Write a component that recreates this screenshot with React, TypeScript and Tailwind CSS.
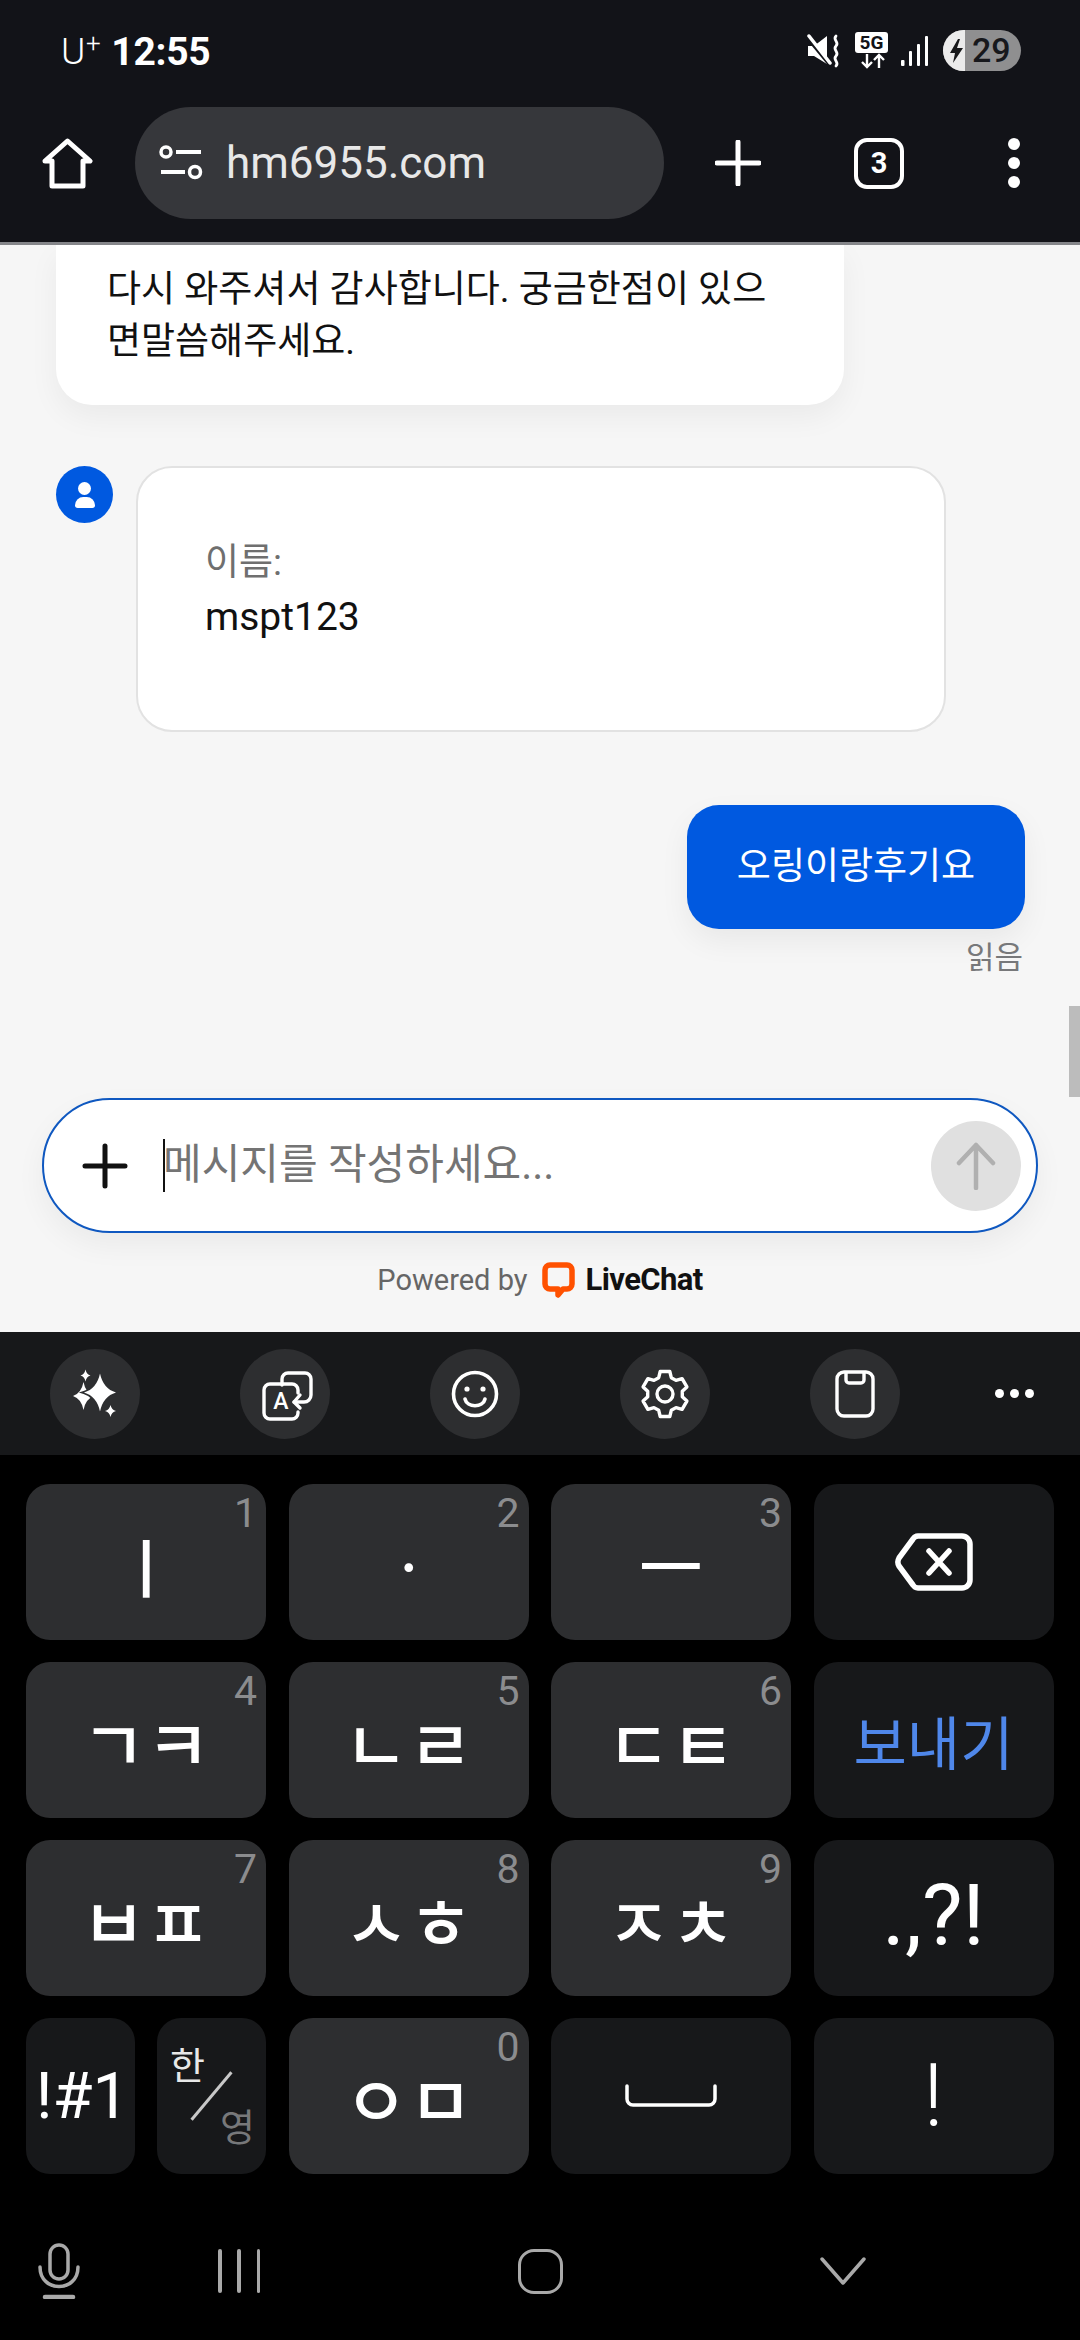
const sans = "font-['Roboto','Noto_Sans_CJK_KR',sans-serif]";
const kr = "font-['Noto_Sans_CJK_KR','Roboto',sans-serif]";

const star = (cx: number, cy: number, w: number, h: number) =>
  `M${cx} ${cy - h}Q${cx + w * 0.2} ${cy - h * 0.2} ${cx + w} ${cy}Q${cx + w * 0.2} ${cy + h * 0.2} ${cx} ${cy + h}Q${cx - w * 0.2} ${cy + h * 0.2} ${cx - w} ${cy}Q${cx - w * 0.2} ${cy - h * 0.2} ${cx} ${cy - h}Z`;

// six teeth, pointy side up
const gearPath = () => {
  const pts: string[] = [];
  for (let k = 0; k < 6; k++) {
    const a = -90 + 60 * k;
    [[-21, 17.5], [-12, 23], [12, 23], [21, 17.5]].forEach(([d, r]) => {
      const t = ((a + d) * Math.PI) / 180;
      pts.push(`${(25 + r * Math.cos(t)).toFixed(1)} ${(25 + r * Math.sin(t)).toFixed(1)}`);
    });
  }
  return `M${pts.join("L")}Z`;
};

const Hint = ({ n }: { n: string }) => (
  <span className="absolute right-[9px] top-[5px] font-['Roboto'] text-[41px] leading-[48px] text-[#8b8c8e]">{n}</span>
);

const JamoKey = ({ label, hint, size = "text-[70px]" }: { label: string; hint: string; size?: string }) => (
  <div className={`relative flex h-[156px] items-center justify-center rounded-[24px] bg-[#2d2e30] text-white ${kr}`}>
    <Hint n={hint} />
    <span className={`pt-[3px] font-medium leading-none ${size}`}>{label}</span>
  </div>
);

const FnKey = ({ children, className = "" }: { children: React.ReactNode; className?: string }) => (
  <div className={`relative flex h-[156px] items-center justify-center rounded-[24px] bg-[#17181a] text-white ${className}`}>
    {children}
  </div>
);

const ToolCircle = ({ children }: { children: React.ReactNode }) => (
  <div className="flex h-[90px] w-[90px] items-center justify-center rounded-full bg-[#2d2e30] text-white">{children}</div>
);

const StatusIcons = () => (
  <div className="flex items-center">
    {/* mute + vibrate */}
    <svg width="34" height="36" viewBox="0 0 34 36" fill="none">
      <path d="M1 13h6L20 3v28L7 23H1z" fill="white" />
      <path d="M1 5l23 28" stroke="#121318" strokeWidth="4" />
      <path d="M2 3l21 27" stroke="white" strokeWidth="3.500" strokeLinecap="round" />
      <path d="M29 3c-4 4 4 6 0 10s4 6 0 10 4 6 0 10" stroke="white" strokeWidth="2.800" strokeLinecap="round" />
    </svg>
    {/* 5G */}
    <div className="ml-[14px] flex w-[33px] flex-col items-center">
      <div className="flex h-[21px] w-[33px] items-center justify-center rounded-[3px] bg-white font-['Roboto'] text-[19px] font-bold leading-none text-[#121318]">5G</div>
      <svg width="28" height="16" viewBox="0 0 28 16" fill="none" stroke="white" strokeWidth="2.400">
        <path d="M9 1v13M4 9l5 5 5-5" />
        <path d="M21 15V2M16 7l5-5 5 5" />
      </svg>
    </div>
    {/* signal */}
    <svg className="ml-[13px]" width="28" height="30" viewBox="0 0 28 30" fill="white">
      <rect x="0" y="24" width="3.500" height="6" rx="1" />
      <rect x="8" y="15" width="3" height="15" rx="1" />
      <rect x="16" y="8" width="3" height="22" rx="1" />
      <rect x="24" y="0" width="3" height="30" rx="1" />
    </svg>
    {/* battery */}
    <div className="relative ml-[14px] flex h-[41px] w-[78px] overflow-hidden rounded-full bg-[#8f8f90]">
      <div className="flex h-full w-[22px] items-center justify-end bg-[#ebebeb] pr-[1px]">
        <svg width="15" height="24" viewBox="0 0 15 24" fill="#17181a">
          <path d="M9 0L1 14h5l-2 10 10-15H8l3-9z" />
        </svg>
      </div>
      <span className="pl-[7px] font-['Roboto'] text-[34px] font-medium leading-[41px] text-[#17181c]">29</span>
    </div>
  </div>
);

const Header = () => (
  <header className="h-[245px] shrink-0 border-b-[3px] border-[#85868a] bg-[#121318] text-white">
    <div className="flex h-[107px] items-start justify-between pl-[61px] pr-[59px] pt-[30px]">
      <div className="flex items-center font-['Roboto'] leading-[44px]">
        <span className="relative mr-[26px] text-[37px] font-light">
          U<span className="absolute left-[25px] top-[-9px] text-[26px]">+</span>
        </span>
        <span className="text-[39px] font-bold tracking-[-0.3px]">12:55</span>
      </div>
      <StatusIcons />
    </div>
    <div className="flex h-[112px] items-center pl-[42px]">
      <svg width="51" height="51" viewBox="0 0 51 51" fill="none" stroke="white" strokeWidth="5" strokeLinejoin="round">
        <path d="M3 23L25.500 3 48 23H41V48H10V23z" />
      </svg>
      <div className="ml-[42px] flex h-[112px] w-[529px] items-center rounded-full bg-[#36373b] pl-[24px]">
        <svg width="44" height="38" viewBox="0 0 44 38" fill="none" stroke="white" strokeWidth="3.500">
          <circle cx="7" cy="8" r="5" />
          <path d="M17 8h25M2 28h24" strokeWidth="4" />
          <circle cx="36" cy="28" r="5.500" />
        </svg>
        <span className="ml-[23px] font-['Roboto'] text-[44px] leading-none text-[#e8e8e8]">hm6955.com</span>
      </div>
      <svg className="ml-[51px]" width="46" height="46" viewBox="0 0 46 46" stroke="white" strokeWidth="5" strokeLinecap="round">
        <path d="M23 2v42M2 23h42" />
      </svg>
      <div className="ml-[93px] flex h-[51px] w-[50px] items-center justify-center rounded-[13px] border-[4.500px] border-white font-['Roboto'] text-[29px] font-bold leading-none">3</div>
      <div className="ml-[104px] flex flex-col gap-[7px]">
        <div className="h-[12px] w-[12px] rounded-full bg-white" />
        <div className="h-[12px] w-[12px] rounded-full bg-white" />
        <div className="h-[12px] w-[12px] rounded-full bg-white" />
      </div>
    </div>
  </header>
);

const Chat = () => (
  <main className={`relative flex h-[1087px] shrink-0 flex-col overflow-hidden bg-[#f6f6f6] ${sans}`}>
    <div className="ml-[56px] h-[160px] w-[788px] shrink-0 rounded-b-[36px] bg-white pl-[51px] pt-[19px] text-[37px] leading-[52px] text-[#111] shadow-[0_12px_30px_rgba(0,0,0,0.05)]">
      다시 와주셔서 감사합니다. 궁금한점이 있으
      <br />
      면말씀해주세요.
    </div>
    <div className="ml-[56px] mt-[61px] flex gap-[23px]">
      <div className="flex h-[57px] w-[57px] flex-col items-center justify-center rounded-full bg-[#0059e0]">
        <div className="h-[13px] w-[13px] rounded-full bg-white" />
        <div className="mt-[2px] h-[11px] w-[20px] rounded-t-[9px] rounded-b-[3px] bg-white" />
      </div>
      <div className="h-[266px] w-[810px] rounded-[36px] border-2 border-[#e2e2e2] bg-white pl-[67px] pt-[68px] text-[37px] leading-[54px]">
        <div className="text-[#6f6f6f]">이름:</div>
        <div className="text-[39px] text-[#111]">mspt123</div>
      </div>
    </div>
    <div className="mr-[55px] mt-[73px] flex h-[124px] w-[338px] items-center justify-center self-end rounded-[32px] bg-[#0059e0] text-[37px] text-white shadow-[0_12px_30px_rgba(0,0,0,0.06)]">
      오링이랑후기요
    </div>
    <div className="mr-[57px] mt-[11px] self-end text-[31px] leading-[36px] text-[#77787a]">읽음</div>

    <div className="mx-[42px] mt-[122px] flex h-[135px] w-[996px] shrink-0 items-center rounded-full border-2 border-[#0f58c0] bg-white pl-[38px] pr-[15px] shadow-[0_12px_30px_rgba(0,0,0,0.05)]">
      <svg width="46" height="46" viewBox="0 0 46 46" stroke="#111" strokeWidth="5" strokeLinecap="round">
        <path d="M23 3v40M3 23h40" />
      </svg>
      <div className="ml-[35px] h-[53px] w-[2px] bg-[#111]" />
      <span className="-ml-[2px] flex-1 pb-[2px] text-[42px] leading-none text-[#747474]">메시지를 작성하세요...</span>
      <div className="flex h-[90px] w-[90px] items-center justify-center rounded-full bg-[#e0e0e0]">
        <svg width="40" height="48" viewBox="0 0 40 48" fill="none" stroke="#b0b0b0" strokeWidth="4.500" strokeLinecap="round" strokeLinejoin="round">
          <path d="M20 46V3M3 21L20 3l17 18" />
        </svg>
      </div>
    </div>

    <div className="mt-[27px] flex items-center justify-center">
      <span className="text-[29px] leading-[40px] text-[#666]">Powered by</span>
      <svg className="ml-[14px]" width="33" height="36" viewBox="0 0 33 36" fill="none">
        <path d="M8 3h17a5 5 0 015 5v14a5 5 0 01-5 5h-4l-5 6v-6H8a5 5 0 01-5-5V8a5 5 0 015-5z" stroke="#ff5100" strokeWidth="5.500" strokeLinejoin="round" />
      </svg>
      <span className="ml-[11px] text-[31px] font-bold leading-[40px] tracking-[-0.6px] text-[#111]">LiveChat</span>
    </div>

    {/* scrollbar thumb */}
    <div className="absolute right-0 top-[761px] h-[91px] w-[11px] bg-[#bcbcbc]" />
  </main>
);

const KeyboardBar = () => (
  <div className="flex h-[123px] shrink-0 items-center bg-[#17181a] pl-[50px]">
    <div className="flex gap-[100px]">
      <ToolCircle>
        <svg width="90" height="90" viewBox="0 0 90 90" fill="white">
          <path d={star(33.500, 47, 10.500, 14)} />
          <path d={star(50, 43.500, 16, 19)} stroke="#2d2e30" strokeWidth="3" paintOrder="stroke" />
          <path d={star(35.500, 26.500, 5, 6)} />
          <path d={star(60.500, 62, 5.500, 6)} />
        </svg>
      </ToolCircle>
      <ToolCircle>
        <svg width="90" height="90" viewBox="0 0 90 90" fill="none" stroke="white" strokeWidth="3.400" strokeLinecap="round" strokeLinejoin="round">
          <path d="M42 36v-6a6 6 0 016-6h17a6 6 0 016 6v16a7 7 0 01-7 7H54" />
          <path d="M60 46l-6 7 6 6" />
          <path d="M58 44v-3a6 6 0 00-6-6H30a6 6 0 00-6 6v23a6 6 0 006 6h22a6 6 0 006-6v-1" />
          <text x="41" y="60" textAnchor="middle" fill="white" stroke="none" fontFamily="Roboto" fontWeight="500" fontSize="23">A</text>
        </svg>
      </ToolCircle>
      <ToolCircle>
        <svg width="48" height="48" viewBox="0 0 48 48" fill="none" stroke="white" strokeWidth="3.600" strokeLinecap="round">
          <circle cx="24" cy="24" r="21.500" />
          <circle cx="16" cy="19" r="2.600" fill="white" stroke="none" />
          <circle cx="32" cy="19" r="2.600" fill="white" stroke="none" />
          <path d="M14 29c2 9 18 9 20 0" />
        </svg>
      </ToolCircle>
      <ToolCircle>
        <svg width="50" height="50" viewBox="0 0 50 50" fill="none" stroke="white" strokeWidth="3.400" strokeLinejoin="round">
          <path d={gearPath()} />
          <circle cx="25" cy="25" r="8" />
        </svg>
      </ToolCircle>
      <ToolCircle>
        <svg width="40" height="48" viewBox="0 0 40 48" fill="none" stroke="white" strokeWidth="3.400">
          <rect x="2" y="2" width="36" height="44" rx="7" />
          <path d="M11 2v8a3 3 0 003 3h12a3 3 0 003-3V2" />
        </svg>
      </ToolCircle>
    </div>
    <div className="ml-[95px] flex gap-[6px]">
      <div className="h-[9px] w-[9px] rounded-full bg-white" />
      <div className="h-[9px] w-[9px] rounded-full bg-white" />
      <div className="h-[9px] w-[9px] rounded-full bg-white" />
    </div>
  </div>
);

const Keyboard = () => (
  <div className="grid grid-cols-[240px_240px_240px_240px] gap-x-[22.500px] gap-y-[22px] px-[26px] pt-[29px]">
    <JamoKey label="ㅣ" hint="1" size="text-[64px]" />
    <JamoKey label="ㆍ" hint="2" size="text-[58px]" />
    <JamoKey label="ㅡ" hint="3" />
    <FnKey>
      <svg width="78" height="58" viewBox="0 0 78 58" fill="none" stroke="white" strokeWidth="5.500" strokeLinejoin="round" strokeLinecap="round">
        <path d="M23 3h44a8 8 0 018 8v36a8 8 0 01-8 8H23a6 6 0 01-5-3L4 33a8 8 0 010-8L18 6a6 6 0 015-3z" />
        <path d="M34 18l20 22M54 18L34 40" />
      </svg>
    </FnKey>

    <JamoKey label="ㄱㅋ" hint="4" />
    <JamoKey label="ㄴㄹ" hint="5" />
    <JamoKey label="ㄷㅌ" hint="6" />
    <FnKey className={`leading-none ${kr}`}>
      <span className="text-[58px] text-[#4f87ea]">보내기</span>
    </FnKey>

    <JamoKey label="ㅂㅍ" hint="7" />
    <JamoKey label="ㅅㅎ" hint="8" />
    <JamoKey label="ㅈㅊ" hint="9" />
    <FnKey className="pb-[5px] font-['Roboto'] text-[86px] leading-none">.,?!</FnKey>

    <div className="grid grid-cols-[109px_109px] gap-x-[22px]">
      <FnKey className="pl-[4px] font-['Roboto'] text-[65px] leading-none">!#1</FnKey>
      <FnKey className={kr}>
        <span className="absolute left-[13px] top-[26px] text-[38px] leading-none text-[#e8e8e8]">한</span>
        <div className="h-[62px] w-[3px] rotate-[40deg] bg-[#c8c8c8]" />
        <span className="absolute bottom-[30px] right-[11px] text-[38px] leading-none text-[#77787a]">영</span>
      </FnKey>
    </div>
    <JamoKey label="ㅇㅁ" hint="0" />
    <FnKey>
      <svg width="92" height="24" viewBox="0 0 92 24" fill="none" stroke="white" strokeWidth="3.500" strokeLinecap="round">
        <path d="M2 2v13a6 6 0 006 6h76a6 6 0 006-6V2" />
      </svg>
    </FnKey>
    <FnKey className="font-['Roboto'] text-[88px] font-light leading-none">!</FnKey>
  </div>
);

const NavBar = () => (
  <div className="flex h-[72px] items-center pl-[38px]">
    <svg width="42" height="56" viewBox="0 0 42 56" fill="none" stroke="#a9a9a9" strokeWidth="3.500" strokeLinecap="round">
      <rect x="12" y="2" width="18" height="34" rx="9" />
      <path d="M2 24c0 26 38 26 38 0" />
      <path d="M7 54h28" strokeWidth="4.500" />
    </svg>
    <div className="ml-[138px] flex h-[44px] w-[42px] justify-between">
      <div className="w-[3.500px] rounded-full bg-[#a9a9a9]" />
      <div className="w-[3.500px] rounded-full bg-[#a9a9a9]" />
      <div className="w-[3.500px] rounded-full bg-[#a9a9a9]" />
    </div>
    <div className="ml-[258px] h-[45px] w-[45px] rounded-[16px] border-[3.500px] border-[#a9a9a9]" />
    <svg className="ml-[257px]" width="46" height="28" viewBox="0 0 46 28" fill="none" stroke="#a9a9a9" strokeWidth="3.500" strokeLinecap="round" strokeLinejoin="round">
      <path d="M2 2l21 24L44 2" />
    </svg>
  </div>
);

const App = () => (
  <div className="flex h-[2340px] w-[1080px] flex-col overflow-hidden bg-black">
    <Header />
    <Chat />
    <KeyboardBar />
    <Keyboard />
    <div className="mt-[61px]">
      <NavBar />
    </div>
  </div>
);

export default App;
